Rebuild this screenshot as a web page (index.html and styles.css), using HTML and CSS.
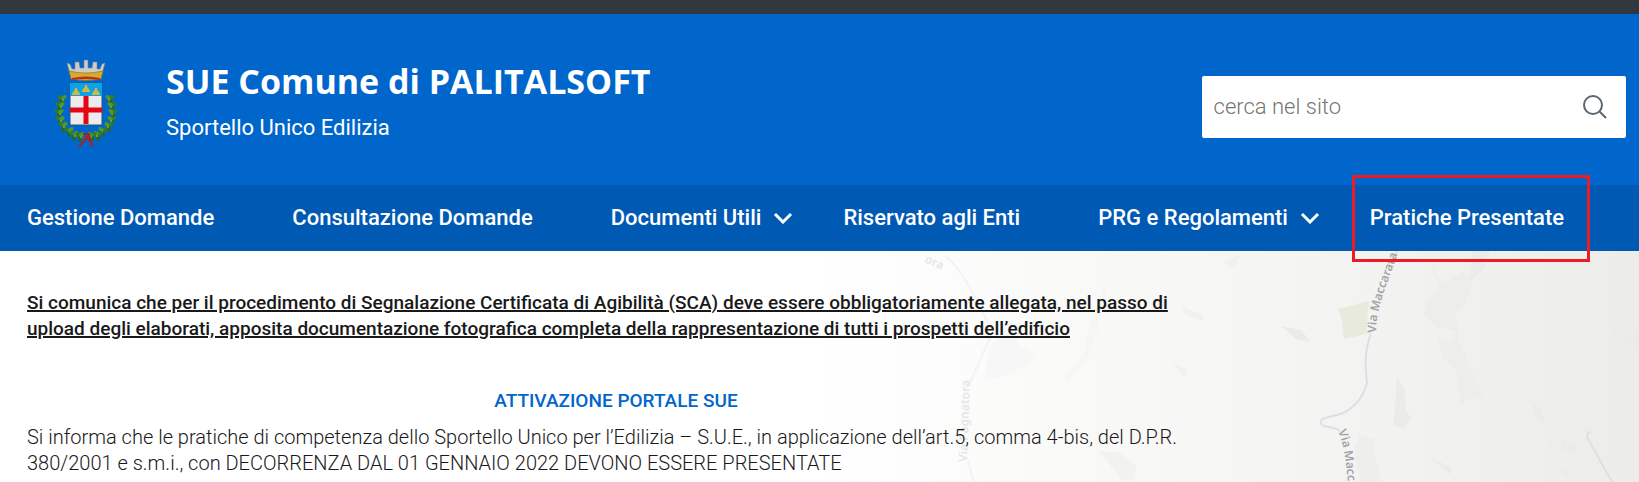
FILE: index.html
```html
<!DOCTYPE html>
<html lang="it">
<head>
    <meta charset="UTF-8">
    <meta name="viewport" content="width=device-width, initial-scale=1.0">
    <title>SUE Comune di PALITALSOFT</title>
    <link rel="stylesheet" href="styles.css">
</head>
<body>
<div class="topbar"></div>
<header class="header">
    <svg class="logo" viewBox="0 0 64 90" aria-hidden="true">
        <defs>
            <g id="leaf">
                <ellipse cx="-3" cy="-1" rx="3" ry="2" transform="rotate(35)" fill="#2f7d2c"/>
                <ellipse cx="3" cy="-1" rx="3" ry="2" transform="rotate(-35)" fill="#4b9a2b"/>
                <ellipse cx="0" cy="2" rx="2" ry="3" fill="#28662f"/>
                <circle cx="1" cy="0" r="1" fill="#8aa83a"/>
            </g>
            <g id="branch">
                <path d="M7 39C2 56 6 76 31 79" fill="none" stroke="#4b6b35" stroke-width="2"/>
                <use href="#leaf" x="8" y="41"/>
                <use href="#leaf" x="6" y="48"/>
                <use href="#leaf" x="5" y="55"/>
                <use href="#leaf" x="6" y="62"/>
                <use href="#leaf" x="9" y="68"/>
                <use href="#leaf" x="15" y="73"/>
                <use href="#leaf" x="20" y="77"/>
                <use href="#leaf" x="26" y="78"/>
            </g>
            <path id="mount" d="M-4 7C-4 3-1 4-1 0H1C1 4 4 3 4 7Z" fill="#d6b63b"/>
        </defs>
        <use href="#branch"/>
        <use href="#branch" transform="translate(64 0) scale(-1 1)"/>
        <path d="M29 75h6l3 13M34 77l-9 11M32 78l6 6" fill="none" stroke="#a8202c" stroke-width="2"/>
        <path d="M13 4l3 1 2 5 3 0 0-7h4l1 6 4 0 0-8h4v8l4 0 1-6h4v7l3 0 2-5 3-1-3 11H16Z" fill="#c9ccc9" stroke="#77808a" stroke-width=".6"/>
        <path d="M15 12Q32 16 49 12L47 20Q32 23 17 20Z" fill="#d9a928" stroke="#8c6b22" stroke-width=".6"/>
        <path d="M18 19Q32 16 46 19L46 21Q32 19 18 21Z" fill="#b5302a"/>
        <rect x="16" y="24" width="32" height="42" fill="#ececee" stroke="#25577c"/>
        <rect x="16" y="24" width="32" height="13" fill="#0aa2e8"/>
        <use href="#mount" x="22" y="29"/>
        <use href="#mount" x="32" y="26"/>
        <use href="#mount" x="42" y="29"/>
        <path d="M32 37v28M16 51h32" stroke="#e30613" stroke-width="5"/>
    </svg>
    <div class="brand">
        <h1 class="title">SUE Comune di PALITALSOFT</h1>
        <p class="subtitle">Sportello Unico Edilizia</p>
    </div>
    <form class="search" role="search">
        <input class="search-input" type="search" placeholder="cerca nel sito" aria-label="cerca nel sito">
        <button class="search-button" type="button" aria-label="Cerca">
            <svg class="search-icon" viewBox="0 0 24 24">
                <circle cx="10" cy="10" r="9"/>
                <path d="M16 16l7 7"/>
            </svg>
        </button>
    </form>
</header>
<nav class="nav">
    <a class="nav-link" href="#">Gestione Domande</a>
    <a class="nav-link" href="#">Consultazione Domande</a>
    <a class="nav-link dropdown" href="#">Documenti Utili
        <svg class="chevron" viewBox="0 0 20 12"><path d="M2 2l8 8 8-8"/></svg>
    </a>
    <a class="nav-link" href="#">Riservato agli Enti</a>
    <a class="nav-link dropdown" href="#">PRG e Regolamenti
        <svg class="chevron" viewBox="0 0 20 12"><path d="M2 2l8 8 8-8"/></svg>
    </a>
    <a class="nav-link highlight" href="#">Pratiche Presentate</a>
</nav>
<main class="main">
    <svg class="map" width="800" height="231" viewBox="0 0 800 231" aria-hidden="true">
        <g fill="#ebece9">
            <path d="M590 2l5 22 10 8 20-12 8 12-6 20-10 10 2 25 12 30 17 34-14-6-12 8-4-32-14-15-6-20 14 6 5-12-20-4-12-12 2-14 14-10-4-20z" opacity=".7"/>
            <path d="M633 0h18l-6 17-15 16z"/>
            <path d="M558 125l8 14 1 20 5 8-6 10-12-2 2-20z"/>
            <path d="M442 75l20 4 10 12-14-2z"/>
            <path d="M521 184l16 4-2 12 8 31h-22l-6-32z" opacity=".6"/>
            <path d="M772 73l15 15 13-12v21l-14-2-11-10z"/>
            <path d="M693 152l10 7 4 14-8-3zM708 185l8 8-6 4zM723 187l16 9-4 6-14-4zM724 216l10 6-8 4zM590 206l22 10-1 8z"/>
            <path d="M150 95l20-22 12-2-4 22 18 10-8 12-24 10-18 4zM227 125l18-22 5-25 15-46 2 8-10 45-10 25-20 22z" opacity=".2"/>
            <path d="M260 200l22 2 16 14-4 14h-10zM385 12l17-8-8 12zM334 112l15 7-4 8zM344 56l20 8v6l-20-8z" opacity=".5"/>
        </g>
        <path d="M499 58l31-8-3 33-22 5-2-19z" fill="#e7eadd"/>
        <g fill="none" stroke="#dfdfe3" stroke-width="2">
            <path d="M558 0l-3 7M532 82C524 105 527 120 528 132C524 148 516 155 508 160C497 166 482 166 482 170C480 178 494 174 501 180"/>
            <path d="M773 231l-25-45q0-5 4-5"/>
            <path d="M107 5C129 24 141 60 154 80L130 134M129 210l6 21" stroke="#f3f3f5"/>
        </g>
        <path id="road-one" d="M537 82C537 55 549 31 559 2" fill="none"/>
        <path id="road-two" d="M499 180C507 200 507 215 511 250" fill="none"/>
        <g class="map-label">
            <text><textPath href="#road-one">Via Maccarata</textPath></text>
            <text><textPath href="#road-two">Via Macc</textPath></text>
            <text class="faint" transform="translate(128 211) rotate(-88)">Via Pagnatora</text>
            <text class="faint" transform="translate(85 11) rotate(24)">ora</text>
        </g>
    </svg>
    <div class="content">
        <p class="notice">Si comunica che per il procedimento di Segnalazione Certificata di Agibilità (SCA) deve essere obbligatoriamente allegata, nel passo di<br>upload degli elaborati, apposita documentazione fotografica completa della rappresentazione di tutti i prospetti dell’edificio</p>
        <h2 class="heading">ATTIVAZIONE PORTALE SUE</h2>
        <p class="text">Si informa che le pratiche di competenza dello Sportello Unico per l’Edilizia – S.U.E., in applicazione dell’art.5, comma 4-bis, del D.P.R.<br>380/2001 e s.m.i., con DECORRENZA DAL 01 GENNAIO 2022 DEVONO ESSERE PRESENTATE</p>
    </div>
</main>
</body>
</html>
```
FILE: styles.css
```css
* {
    box-sizing: border-box;
}
body {
    margin: 0;
    font-family: Roboto, "Liberation Sans", sans-serif;
    color: #19191a;
    background-color: #fff;
}
.topbar {
    height: 14px;
    background-color: #30373d;
}
.header {
    display: flex;
    align-items: center;
    height: 171px;
    padding: 8px 13px 0 54px;
    background-color: #0066cc;
    color: #fff;
}
.logo {
    width: 64px;
    height: 90px;
}
.brand {
    flex: 1;
    padding-left: 48px;
}
.title {
    margin: 0;
    font-family: "Open Sans", "Noto Sans", sans-serif;
    font-size: 34px;
    line-height: 48px;
    font-weight: 700;
}
.subtitle {
    margin: 0;
    font-size: 22px;
    line-height: 46px;
}
.search {
    display: flex;
    width: 27%;
    height: 62px;
    margin-top: 6px;
    border-radius: 2px;
    background-color: #fff;
}
.search-input {
    flex: 1;
    min-width: 0;
    padding: 0 12px;
    border: 0;
    background: none;
    font: 300 22px Roboto, sans-serif;
}
.search-input::placeholder {
    color: #757575;
}
.search-button {
    display: flex;
    align-items: center;
    justify-content: center;
    width: 62px;
    border: 0;
    background: none;
}
.search-icon {
    width: 24px;
    height: 24px;
    fill: none;
    stroke: #5a6772;
    stroke-width: 2;
}
.nav {
    display: flex;
    align-items: center;
    height: 66px;
    padding: 0 49px 0 27px;
    background-color: #0059b3;
}
.nav-link {
    display: flex;
    align-items: center;
    gap: 12px;
    padding-right: 78px;
    color: #fff;
    font-size: 22px;
    line-height: 28px;
    font-weight: 500;
    text-decoration: none;
    white-space: nowrap;
}
.dropdown {
    padding-right: 50px;
}
.chevron {
    width: 20px;
    height: 12px;
    fill: none;
    stroke: #fff;
    stroke-width: 3;
}
.highlight {
    position: relative;
    z-index: 1;
    height: 87px;
    margin-left: auto;
    padding: 0 23px 0 15px;
    border: 3px solid #ed1c24;
}
.dropdown:has(+ .highlight) {
    padding-right: 0;
}
.main {
    position: relative;
    height: calc(100vh - 251px);
    overflow: hidden;
    background: linear-gradient(to right, #fff 50%, #f4f4f2 80%, #ecede9);
}
.map {
    position: absolute;
    top: 0;
    right: 0;
}
.map-label {
    font-family: "Noto Sans", sans-serif;
    font-size: 12px;
    font-weight: 600;
    fill: #a3a3a6;
}
.faint {
    fill: #e6e6e8;
}
.content {
    position: relative;
    width: 74%;
    padding: 39px 8px 0 27px;
}
.notice,
.text {
    margin: 0;
    font-size: 19px;
    line-height: 26px;
    white-space: nowrap;
}
.notice {
    font-weight: 500;
    text-decoration: underline;
    text-decoration-thickness: 2px;
}
.heading {
    margin: 46px 0 10px;
    color: #0066cc;
    font-size: 19px;
    line-height: 26px;
    font-weight: 500;
    text-align: center;
}
.text {
    font-size: 20px;
    font-weight: 300;
}
```
